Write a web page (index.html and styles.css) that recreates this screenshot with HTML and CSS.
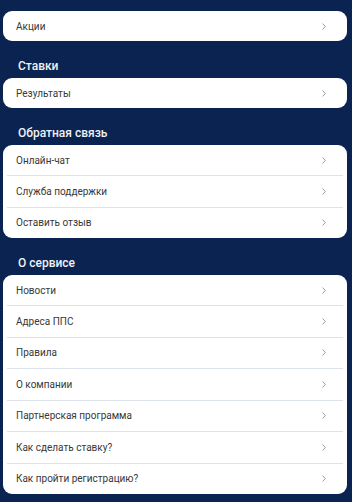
FILE: index.html
```html
<!DOCTYPE html>
<html lang="ru">
<head>
<meta charset="utf-8">
<link rel="stylesheet" href="styles.css">
</head>
<body>
<div class="page">
  <div class="card">
    <div class="row"><span>Акции</span><svg class="chev" viewBox="0 0 4 7"><path d="M0.6 0.6 L3.3 3.5 L0.6 6.4"/></svg></div>
  </div>

  <div class="title">Ставки</div>
  <div class="card">
    <div class="row"><span>Результаты</span><svg class="chev" viewBox="0 0 4 7"><path d="M0.6 0.6 L3.3 3.5 L0.6 6.4"/></svg></div>
  </div>

  <div class="title">Обратная связь</div>
  <div class="card">
    <div class="row"><span>Онлайн-чат</span><svg class="chev" viewBox="0 0 4 7"><path d="M0.6 0.6 L3.3 3.5 L0.6 6.4"/></svg></div>
    <div class="row"><span>Служба поддержки</span><svg class="chev" viewBox="0 0 4 7"><path d="M0.6 0.6 L3.3 3.5 L0.6 6.4"/></svg></div>
    <div class="row"><span>Оставить отзыв</span><svg class="chev" viewBox="0 0 4 7"><path d="M0.6 0.6 L3.3 3.5 L0.6 6.4"/></svg></div>
  </div>

  <div class="title">О сервисе</div>
  <div class="card">
    <div class="row"><span>Новости</span><svg class="chev" viewBox="0 0 4 7"><path d="M0.6 0.6 L3.3 3.5 L0.6 6.4"/></svg></div>
    <div class="row"><span>Адреса ППС</span><svg class="chev" viewBox="0 0 4 7"><path d="M0.6 0.6 L3.3 3.5 L0.6 6.4"/></svg></div>
    <div class="row"><span>Правила</span><svg class="chev" viewBox="0 0 4 7"><path d="M0.6 0.6 L3.3 3.5 L0.6 6.4"/></svg></div>
    <div class="row"><span>О компании</span><svg class="chev" viewBox="0 0 4 7"><path d="M0.6 0.6 L3.3 3.5 L0.6 6.4"/></svg></div>
    <div class="row"><span>Партнерская программа</span><svg class="chev" viewBox="0 0 4 7"><path d="M0.6 0.6 L3.3 3.5 L0.6 6.4"/></svg></div>
    <div class="row"><span>Как сделать ставку?</span><svg class="chev" viewBox="0 0 4 7"><path d="M0.6 0.6 L3.3 3.5 L0.6 6.4"/></svg></div>
    <div class="row"><span>Как пройти регистрацию?</span><svg class="chev" viewBox="0 0 4 7"><path d="M0.6 0.6 L3.3 3.5 L0.6 6.4"/></svg></div>
  </div>
</div>
</body>
</html>
```
FILE: styles.css
```css
html, body {
  margin: 0;
  padding: 0;
  background: #0a2350;
  height: 100%;
  overflow: hidden;
}
.page {
  display: flex;
  flex-direction: column;
  padding: 11px 5px 0 3px;
  font-family: Roboto, "Noto Sans", sans-serif;
}
.card {
  background: #ffffff;
  border-radius: 9px;
  display: flex;
  flex-direction: column;
  overflow: hidden;
}
.row {
  height: 30.5px;
  display: flex;
  align-items: center;
  justify-content: space-between;
  padding: 0 21px 0 13px;
  font-size: 10px;
  color: #383838;
  position: relative;
}
.card .row:first-child { height: 30px; }
.row + .row {
  border-top: 1px solid transparent;
}
.row + .row::before {
  content: "";
  position: absolute;
  left: 4px;
  right: 4px;
  top: -1px;
  height: 1px;
  background: #dde3ec;
}
.chev {
  width: 4px;
  height: 7px;
  fill: none;
  stroke: #9a9a9a;
  stroke-width: 1;
}
.title {
  margin: 17px 0 4px 15px;
  font-size: 12px;
  line-height: 16px;
  font-weight: 500;
  color: #eef1f6;
}
```
